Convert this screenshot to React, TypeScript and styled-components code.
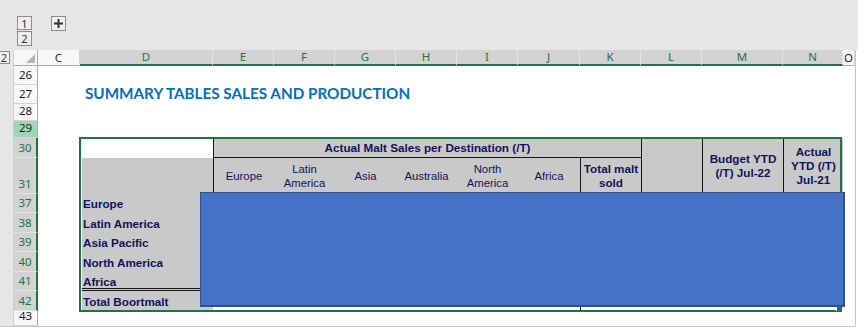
import React from "react";
import styled, { createGlobalStyle } from "styled-components";

const GREEN = "#217346";
const NAVY = "#12125c";
const FILL = "#c9c9c9";
const RULE = "#151515";

const GlobalStyle = createGlobalStyle`
  html, body { margin: 0; padding: 0; background: #ffffff; }
  body { overflow: hidden; }
`;

const Window = styled.div`
  width: 858px;
  height: 328px;
  background: #ffffff;
  overflow: hidden;
  font-family: "Liberation Sans", Arial, sans-serif;
`;

const OutlineBar = styled.div`
  height: 50px;
  box-sizing: border-box;
  background: #e6e6e6;
  display: flex;
  align-items: flex-start;
  gap: 19px;
  padding: 16px 0 0 17px;
`;

const LevelStack = styled.div`
  display: flex;
  flex-direction: column;
  gap: 1px;
`;

const OutlineButton = styled.div<{ $h?: number }>`
  width: 15px;
  height: ${(p) => p.$h ?? 14}px;
  box-sizing: border-box;
  border: 1px solid #8d8d8d;
  background: #eeeeee;
  color: #333333;
  font: 11px/1 "Noto Sans", sans-serif;
  display: flex;
  align-items: center;
  justify-content: center;
`;

const Sheet = styled.div`
  position: relative;
  display: grid;
  grid-template-columns: 14px 24px 42px 133px 61px 61px 61px 61px 61px 62px 61px 61px 81px 60px 12px;
  grid-template-rows: 16px 19px 19px 17px 17px 20px 36px 19px 20px 19px 20px 19px 20px 15px;
  width: 856px;
  box-sizing: border-box;
  border-right: 1px solid #c6c6c6;
  border-bottom: 1px solid #c6c6c6;
  background: #ffffff;
`;

const Gutter = styled.div`
  grid-column: 1;
  grid-row: 1 / -1;
  box-sizing: border-box;
  background: #e6e6e6;
  border-right: 1px solid #d0d0d0;
  padding-top: 1px;
`;

const RowLevelButton = styled.div`
  width: 10px;
  height: 13px;
  box-sizing: border-box;
  border: 1px solid #8d8d8d;
  border-left: none;
  background: #eeeeee;
  color: #333333;
  font: 11px/11px "Noto Sans", sans-serif;
  text-align: right;
  padding-right: 2px;
  overflow: hidden;
`;

const Corner = styled.div`
  grid-column: 2;
  grid-row: 1;
  position: relative;
  box-sizing: border-box;
  background: #f7f7f7;
  border-right: 1px solid #ababab;
  border-bottom: 1px solid #ababab;
`;

const CornerMark = styled.svg`
  position: absolute;
  right: 2px;
  bottom: 2px;
`;

const ColHeader = styled.div<{ $col: number; $selected: boolean }>`
  grid-column: ${(p) => p.$col};
  grid-row: 1;
  box-sizing: border-box;
  display: flex;
  align-items: center;
  justify-content: center;
  font: 11.5px/1 "Noto Sans", sans-serif;
  background: ${(p) => (p.$selected ? "#d2d2d2" : "#f7f7f7")};
  color: ${(p) => (p.$selected ? GREEN : "#262626")};
  border-right: 1px solid ${(p) => (p.$selected ? "#e4e4e4" : "#d4d4d4")};
  border-bottom: ${(p) => (p.$selected ? `2px solid ${GREEN}` : "1px solid #ababab")};
`;

type RowState = "plain" | "active" | "selected";

const RowHeader = styled.div<{ $row: number; $state: RowState }>`
  grid-column: 2;
  grid-row: ${(p) => p.$row};
  box-sizing: border-box;
  display: flex;
  align-items: flex-end;
  justify-content: center;
  padding-bottom: 2px;
  font: 11.5px/14px "Noto Sans", sans-serif;
  background: ${(p) =>
    p.$state === "selected" ? "#d2d2d2" : p.$state === "active" ? "#9fd5b7" : "#f7f7f7"};
  color: ${(p) => (p.$state === "selected" ? GREEN : "#1e1e1e")};
  border-bottom: 1px solid ${(p) => (p.$state === "selected" ? "#e4e4e4" : "#d4d4d4")};
  border-right: ${(p) => (p.$state === "selected" ? `2px solid ${GREEN}` : "1px solid #ababab")};
`;

const Title = styled.div`
  grid-column: 4 / 15;
  grid-row: 3;
  display: flex;
  align-items: flex-end;
  padding: 0 0 3px 5px;
  font: 700 15.25px/1 Lato, "Open Sans", sans-serif;
  color: #0070c0;
  white-space: nowrap;
`;

const HeadCell = styled.div<{
  $col: string;
  $row: string;
  $bold?: boolean;
  $left?: boolean;
  $under?: boolean;
}>`
  grid-column: ${(p) => p.$col};
  grid-row: ${(p) => p.$row};
  box-sizing: border-box;
  background: ${FILL};
  display: flex;
  align-items: center;
  justify-content: center;
  text-align: center;
  color: ${NAVY};
  font-weight: ${(p) => (p.$bold ? 700 : 400)};
  font-size: ${(p) => (p.$bold ? 11.7 : 11.3)}px;
  line-height: 14px;
  border-left: ${(p) => (p.$left ? `1px solid ${RULE}` : "none")};
  border-bottom: ${(p) => (p.$under ? `1px solid ${RULE}` : "none")};
`;

const LabelFill = styled.div`
  grid-column: 4;
  grid-row: 7;
  background: ${FILL};
`;

const RowLabel = styled.div<{ $row: number; $double?: boolean }>`
  grid-column: 4;
  grid-row: ${(p) => p.$row};
  box-sizing: border-box;
  background: ${(p) =>
    p.$double
      ? `linear-gradient(to top, ${RULE} 0 1px, ${FILL} 1px 2px, ${RULE} 2px 3px, ${FILL} 3px)`
      : FILL};
  display: flex;
  align-items: flex-end;
  padding: 0 0 2px 3px;
  color: ${NAVY};
  font-weight: 700;
  font-size: 11.7px;
  line-height: 14px;
  white-space: nowrap;
`;

const ColumnRule = styled.div`
  grid-column: 11;
  grid-row: 8 / 14;
  border-left: 1px solid ${RULE};
`;

const Selection = styled.div`
  position: absolute;
  left: 79px;
  top: 87px;
  width: 763px;
  height: 175px;
  box-sizing: border-box;
  border: 2px solid ${GREEN};
  box-shadow: inset 1px 0 0 #ffffff;
  pointer-events: none;
  z-index: 2;
`;

const FillHandle = styled.div`
  position: absolute;
  right: -2px;
  bottom: -1px;
  width: 6px;
  height: 6px;
  box-sizing: border-box;
  background: ${GREEN};
  border-left: 1px solid #ffffff;
  border-top: 1px solid #ffffff;
`;

const Shape = styled.div`
  position: absolute;
  left: 200px;
  top: 142px;
  width: 645px;
  height: 115px;
  box-sizing: border-box;
  background: #4472c4;
  border: 1px solid #2f528f;
  border-right-width: 2px;
  border-bottom-width: 2px;
  z-index: 3;
`;

const COLUMNS = ["C", "D", "E", "F", "G", "H", "I", "J", "K", "L", "M", "N", "O"];

const ROWS: { n: number; state: RowState }[] = [
  { n: 26, state: "plain" },
  { n: 27, state: "plain" },
  { n: 28, state: "plain" },
  { n: 29, state: "active" },
  { n: 30, state: "selected" },
  { n: 31, state: "selected" },
  { n: 37, state: "selected" },
  { n: 38, state: "selected" },
  { n: 39, state: "selected" },
  { n: 40, state: "selected" },
  { n: 41, state: "selected" },
  { n: 42, state: "selected" },
  { n: 43, state: "plain" },
];

const SUBHEADS = [
  ["Europe"],
  ["Latin", "America"],
  ["Asia"],
  ["Australia"],
  ["North", "America"],
  ["Africa"],
];

const LABELS = ["Europe", "Latin America", "Asia Pacific", "North America", "Africa", "Total Boortmalt"];

const Lines = ({ parts }: { parts: string[] }) => (
  <span>
    {parts.map((t, i) => (
      <React.Fragment key={i}>
        {i > 0 && <br />}
        {t}
      </React.Fragment>
    ))}
  </span>
);

export default function App() {
  return (
    <Window>
      <GlobalStyle />
      <OutlineBar>
        <LevelStack>
          <OutlineButton>1</OutlineButton>
          <OutlineButton $h={15}>2</OutlineButton>
        </LevelStack>
        <OutlineButton $h={15}>
          <svg width="9" height="9" viewBox="0 0 9 9">
            <rect x="3.5" y="0" width="2" height="9" fill="#333" />
            <rect x="0" y="3.5" width="9" height="2" fill="#333" />
          </svg>
        </OutlineButton>
      </OutlineBar>
      <Sheet>
        <Gutter>
          <RowLevelButton>2</RowLevelButton>
        </Gutter>
        <Corner>
          <CornerMark width="9" height="9" viewBox="0 0 9 9">
            <polygon points="9,0 9,9 0,9" fill="#b4b4b4" />
          </CornerMark>
        </Corner>
        {COLUMNS.map((c, i) => (
          <ColHeader key={c} $col={i + 3} $selected={c !== "C" && c !== "O"}>
            {c}
          </ColHeader>
        ))}
        {ROWS.map((r, i) => (
          <RowHeader key={r.n} $row={i + 2} $state={r.state}>
            {r.n}
          </RowHeader>
        ))}

        <Title>SUMMARY TABLES SALES AND PRODUCTION</Title>

        <HeadCell $col="5 / 12" $row="6" $bold $left $under>
          Actual Malt Sales per Destination (/T)
        </HeadCell>
        {SUBHEADS.map((parts, i) => (
          <HeadCell key={i} $col={`${i + 5}`} $row="7" $left={i === 0}>
            <Lines parts={parts} />
          </HeadCell>
        ))}
        <HeadCell $col="11" $row="7" $bold $left>
          <Lines parts={["Total malt", "sold"]} />
        </HeadCell>
        <HeadCell $col="12" $row="6 / 8" $left />
        <HeadCell $col="13" $row="6 / 8" $bold $left>
          <Lines parts={["Budget YTD", "(/T) Jul-22"]} />
        </HeadCell>
        <HeadCell $col="14" $row="6 / 8" $bold $left>
          <Lines parts={["Actual", "YTD (/T)", "Jul-21"]} />
        </HeadCell>

        <LabelFill />
        {LABELS.map((t, i) => (
          <RowLabel key={t} $row={i + 8} $double={i === 4}>
            {t}
          </RowLabel>
        ))}
        <ColumnRule />

        <Selection>
          <FillHandle />
        </Selection>
        <Shape />
      </Sheet>
    </Window>
  );
}
